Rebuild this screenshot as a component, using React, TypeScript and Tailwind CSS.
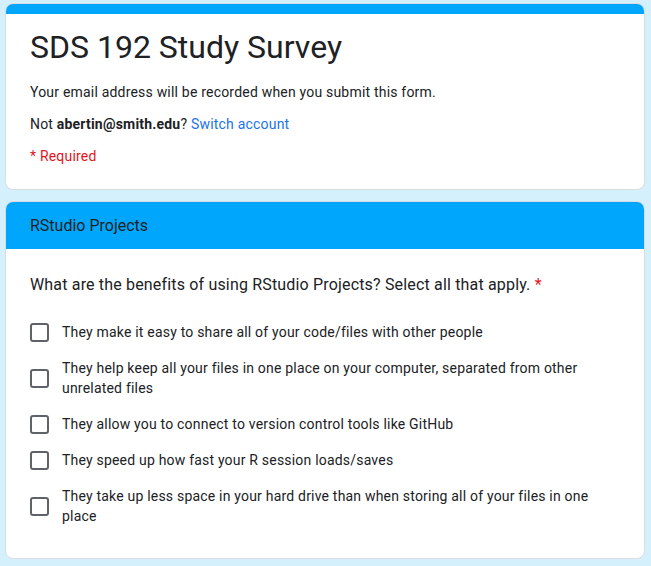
const options = [
  'They make it easy to share all of your code/files with other people',
  'They help keep all your files in one place on your computer, separated from other unrelated files',
  'They allow you to connect to version control tools like GitHub',
  'They speed up how fast your R session loads/saves',
  'They take up less space in your hard drive than when storing all of your files in one place',
];

export default function App() {
  return (
    <div className="min-h-[566px] bg-[#d5f0fd] px-[5px] pt-[3px] pb-2 font-['Roboto',sans-serif] text-[#202124]">
      {/* Header card */}
      <div className="w-[640px] overflow-hidden rounded-lg border border-[#dadce0] bg-white">
        <div className="h-[10px] bg-[#00a6fb]" />
        <div className="px-6 pt-[13px] pb-[23px]">
          <h1 className="text-[32px] leading-[40px]">SDS 192 Study Survey</h1>
          <p className="mt-[15px] text-sm leading-5 tracking-[0.2px]">
            Your email address will be recorded when you submit this form.
          </p>
          <p className="mt-3 text-sm leading-5 tracking-[0.2px]">
            Not <span className="font-bold">abertin@smith.edu</span>?{' '}
            <span className="text-[#1a73e8]">Switch account</span>
          </p>
          <p className="mt-3 text-sm leading-5 tracking-[0.2px] text-[#e3141b]">* Required</p>
        </div>
      </div>

      {/* Section card */}
      <div className="mt-[11px] w-[640px] overflow-hidden rounded-lg border border-[#dadce0] bg-white">
        <div className="flex h-[47px] items-center bg-[#00a6fb] px-6 text-base">RStudio Projects</div>
        <div className="px-6 pt-[24px] pb-[32px]">
          <p className="text-base leading-6 tracking-[0.17px]">
            What are the benefits of using RStudio Projects? Select all that apply.{' '}
            <span className="text-[#e3141b]">*</span>
          </p>
          <div className="mt-[25px] flex flex-col gap-4">
            {options.map((o) => (
              <label key={o} className="flex items-center gap-[13px] text-sm leading-5 tracking-[0.2px]">
                <span className="h-[19px] w-[19px] shrink-0 rounded-[3px] border-2 border-[#5f6368]" />
                <span className="pr-6">{o}</span>
              </label>
            ))}
          </div>
        </div>
      </div>
    </div>
  );
}
